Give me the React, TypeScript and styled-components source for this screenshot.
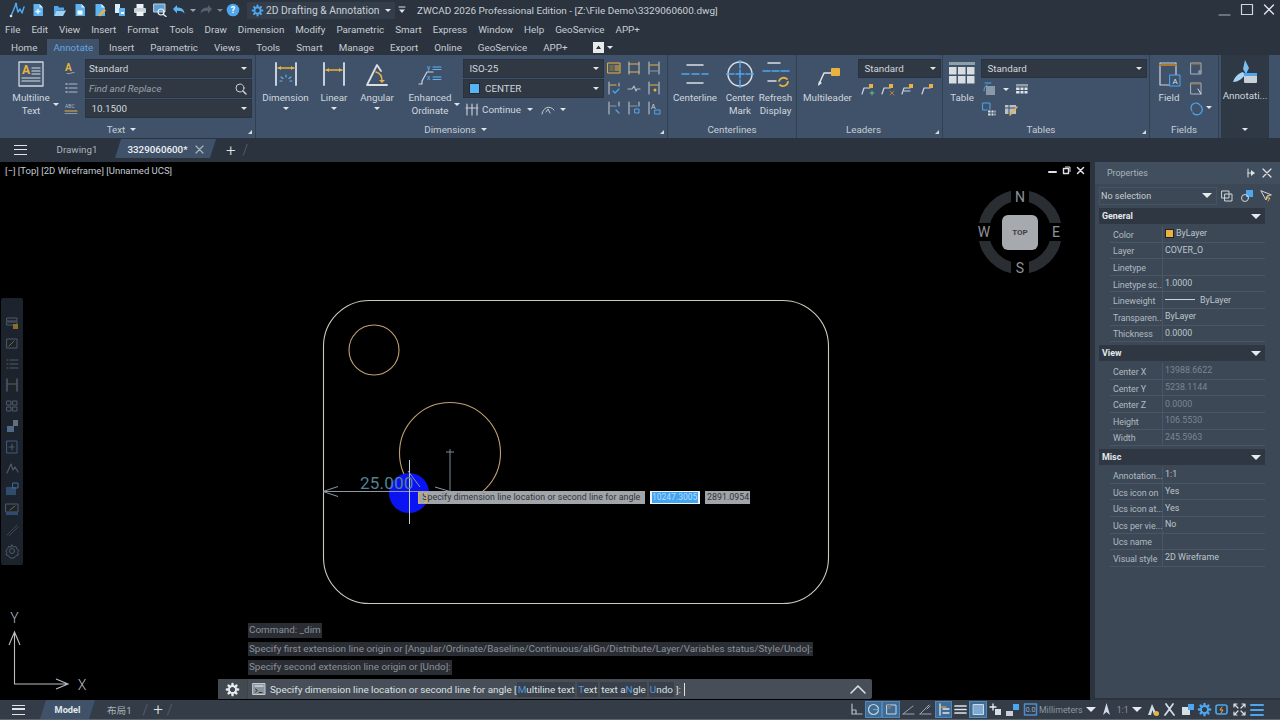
import React from "react";
import styled, { createGlobalStyle } from "styled-components";

const Y = "#e9b23f";
const B = "#4ea6ee";
const W = "#d9dee3";
const G = "#9aa5b1";

const Global = createGlobalStyle`
  html, body { margin: 0; padding: 0; background: #2b333e; overflow: hidden; }
  * { box-sizing: border-box; }
  body { font-family: Roboto, "Liberation Sans", "Noto Sans CJK SC", sans-serif; font-size: 9.8px; color: #cfd6dd; }
`;

const Page = styled.div`
  width: 1280px; height: 720px; display: flex; flex-direction: column; background: #2b333e; overflow: hidden;
`;
const TitleBar = styled.div`
  height: 20px; display: flex; align-items: center; position: relative; background: #2b333e; flex: none;
`;
const Qat = styled.div`display: flex; align-items: center; width: 247px; height: 20px; padding-left: 7px;`;
const QatSlot = styled.span<{ $w: number }>`width: ${p => p.$w}px; display: flex; justify-content: center; align-items: center; flex: none;`;
const Workspace = styled.div`
  width: 148px; height: 17px; background: #343e4a; display: flex; align-items: center; padding: 0 4px; gap: 2px; color: #c9d0d7; font-size: 10.3px; flex: none; white-space: nowrap;
`;
const Grow = styled.span`flex: 1;`;
const Spacer = styled.span<{ $w: number }>`width: ${p => p.$w}px; flex: none;`;
const TitleText = styled.div`margin-left: 8px; color: #c9d0d7; font-size: 9.95px; white-space: nowrap;`;
const WinCtl = styled.div`margin-left: auto; display: flex; gap: 6px; padding-right: 3px; align-items: center;`;

const MenuBar = styled.div`
  height: 18px; display: flex; align-items: center; gap: 11px; padding-left: 5px; background: #2b333e; flex: none; white-space: nowrap; color: #c6cdd4;
`;
const TabBar = styled.div`
  height: 17px; display: flex; align-items: stretch; padding: 1px 0 0 3px; background: #2b333e; flex: none; white-space: nowrap; color: #c6cdd4;
`;
const RibbonTab = styled.div<{ $on?: boolean }>`
  padding: 0 ${p => (p.$on ? 6 : 8)}px; margin: 0 ${p => (p.$on ? 2 : 0)}px; display: flex; align-items: center; flex: none;
  background: ${p => (p.$on ? "#40526a" : "transparent")};
  color: ${p => (p.$on ? "#62a5e2" : "inherit")};
`;
const TabTool = styled.div`margin-left: 18px; display: flex; align-items: center; gap: 3px;`;
const WhiteKey = styled.span`
  width: 11px; height: 11px; background: #e8ebee; display: flex; align-items: center; justify-content: center;
`;

const Ribbon = styled.div`
  height: 83px; display: flex; background: #40526a; flex: none;
`;
const Panel = styled.div<{ $w: number; $dark?: boolean }>`
  width: ${p => p.$w}px; flex: none; display: flex; flex-direction: column; position: relative;
  border-right: 1px solid ${p => (p.$dark ? "transparent" : "#31404f")};
  margin-left: ${p => (p.$dark ? 2 : 0)}px;
  background: ${p => (p.$dark ? "#2e3945" : "transparent")};
`;
const PanelBody = styled.div`flex: 1; display: flex; padding-top: 4px; min-height: 0;`;
const PanelFoot = styled.div<{ $pr?: number }>`
  height: 15px; display: flex; align-items: center; justify-content: center; gap: 5px; position: relative; color: #c6cdd4; padding: 0 ${p => p.$pr ?? 0}px 2px 0; flex: none;
`;
const Launcher = styled.span`
  position: absolute; right: 3px; bottom: 4px; width: 0; height: 0; border-left: 4px solid transparent; border-bottom: 4px solid #d5dae0;
`;
const Big = styled.div<{ $w: number; $pr?: number }>`
  width: ${p => p.$w}px; flex: none; display: flex; flex-direction: column; align-items: center; position: relative; color: #cfd6dd; line-height: 13px; text-align: center; padding-right: ${p => p.$pr ?? 0}px;
`;
const BigIcon = styled.div<{ $mb?: number }>`height: 29px; display: flex; align-items: center; justify-content: center; margin-bottom: ${p => p.$mb ?? 3}px;`;
const Caret = styled.span<{ $c?: string; $ml?: number }>`
  display: inline-block; width: 0; height: 0; border-left: 3px solid transparent; border-right: 3px solid transparent; border-top: 3.5px solid ${p => p.$c || "#e1e5e9"}; flex: none; margin-left: ${p => p.$ml ?? 0}px;
`;
const BigCaret = styled(Caret)`margin-top: 3px;`;
const SideCaret = styled(Caret)`position: absolute; right: 3px; top: 44px;`;
const FieldCaret = styled(Caret)`align-self: flex-end; margin: 0 0 14px 1px;`;
const Stack = styled.div<{ $w: number }>`width: ${p => p.$w}px; flex: none; display: flex; flex-direction: column; gap: 1px;`;
const Combo = styled.div<{ $italic?: boolean }>`
  height: 19px; background: #2f3843; border: 1px solid #293240; display: flex; align-items: center; padding: 0 4px 0 3px; color: ${p => (p.$italic ? "#98a2ad" : "#cfd6dd")}; font-style: ${p => (p.$italic ? "italic" : "normal")}; flex: none; white-space: nowrap;
`;
const IconCol = styled.div<{ $w: number; $gap?: number; $mr?: number }>`
  width: ${p => p.$w}px; flex: none; display: flex; flex-direction: column; align-items: center; gap: ${p => p.$gap ?? 6}px; padding-top: 2px; margin-right: ${p => p.$mr ?? 0}px;
`;
const IconGrid = styled.div`
  display: grid; grid-template-columns: repeat(3, 20px); grid-auto-rows: 20px; place-items: center; flex: none; margin-top: -1px;
`;
const IconRow = styled.div<{ $gap?: number; $pl?: number }>`
  height: 20px; display: flex; align-items: center; gap: ${p => p.$gap ?? 4}px; padding-left: ${p => p.$pl ?? 0}px;
`;
const Swatch = styled.span`width: 11px; height: 11px; background: #5ab4f4; border: 1px solid #222b34; margin: 0 5px 0 2px;`;

const DocBar = styled.div`
  height: 24px; display: flex; align-items: center; background: #2b333e; flex: none; padding-left: 14px;
`;
const Burger = styled.span`
  width: 13px; height: 10px; border-top: 1.5px solid #dfe3e7; border-bottom: 1.5px solid #dfe3e7; position: relative; flex: none;
  &::after { content: ""; position: absolute; left: 0; right: 0; top: 2.8px; height: 1.5px; background: #dfe3e7; }
`;
const DocTab = styled.div<{ $on?: boolean; $ml: number; $w: number }>`
  margin-left: ${p => p.$ml}px; width: ${p => p.$w}px; height: 19px; flex: none; margin-bottom: 3px; padding-top: 2px;
  display: flex; align-items: center; justify-content: center; gap: 7px; white-space: nowrap;
  background: ${p => (p.$on ? "#40526a" : "transparent")};
  color: ${p => (p.$on ? "#eef1f4" : "#aab3bc")};
  font-weight: ${p => (p.$on ? 500 : 400)};
  clip-path: ${p => (p.$on ? "polygon(6px 0, 100% 0, calc(100% - 6px) 100%, 0 100%)" : "none")};
`;
const Plus = styled.span<{ $ml: number }>`margin-left: ${p => p.$ml}px; font-size: 17px; line-height: 17px; color: #dfe3e7; font-weight: 300;`;
const Slash = styled.span<{ $ml: number }>`margin-left: ${p => p.$ml}px; color: #5d6874; font-size: 14px; font-weight: 300;`;

const Main = styled.div`flex: 1; display: flex; min-height: 0; background: #2b333e;`;
const Canvas = styled.div`width: 1090px; flex: none; background: #000; position: relative; overflow: hidden;`;
const Drawing = styled.svg`position: absolute; left: 0; top: 0; display: block;`;
const ViewLabel = styled.div`position: absolute; left: 5px; top: 3px; color: #c3cad1; font-size: 9.5px; white-space: nowrap;`;
const ViewCtl = styled.div`position: absolute; left: 1048px; top: 4px; display: flex; gap: 5px;`;
const LeftTools = styled.div`
  position: absolute; left: 1px; top: 136px; width: 22px; height: 267px; background: #1c232c; border-radius: 2px; display: flex; flex-direction: column; align-items: center; padding-top: 17px; gap: 4.7px;
`;
const Tip = styled.div<{ $l: number; $w: number; $sel?: boolean }>`
  position: absolute; left: ${p => p.$l}px; top: 329px; width: ${p => p.$w}px; height: 13px; background: ${p => (p.$sel ? "#f0f3f5" : "#a1a5a9")}; color: #30343a; font-size: 8.8px; letter-spacing: .05px; line-height: 13px; white-space: nowrap; padding: 0 2px; display: flex; align-items: center;
`;
const TipSel = styled.span`background: #41a3f2; color: #b9dcf5; display: block; flex: 1; height: 11px; line-height: 11px; font-size: 8.5px; letter-spacing: 0;`;
const DashBox = styled.span`position: absolute; left: 418px; top: 331px; width: 9px; height: 10px; border: 1px dashed ${Y};`;
const Cmd = styled.div`position: absolute; left: 218px; top: 461px; width: 654px; display: flex; flex-direction: column; align-items: flex-start; font-size: 9.9px;`;
const History = styled.div`
  margin-left: 30px; height: 14.5px; margin-bottom: 4px; background: #2a2d33; color: #8b9198; padding: 0 1px; line-height: 14.5px; white-space: nowrap;
`;
const CmdInput = styled.div`
  width: 100%; height: 20px; margin-top: 0.5px; background: #474e57; border-radius: 2px; display: flex; align-items: center; color: #dbe0e4; white-space: nowrap;
`;
const CmdGear = styled.div`width: 30px; height: 100%; display: flex; align-items: center; justify-content: center; border-right: 1px solid #3d444c; flex: none; background: #424951;`;
const CmdText = styled.div`flex: 1; display: flex; align-items: center; padding-left: 4px;`;
const CmdPrompt = styled.span`margin-left: 4px;`;
const Chip = styled.span`background: #39404a; padding: 0 1px; margin-right: 2px; line-height: 15px;`;
const Key = styled.span`color: #4d98df;`;
const Cursor = styled.span`width: 1px; height: 13px; background: #dbe0e4; margin-left: 3px;`;

const Props = styled.div`
  width: 185px; margin-left: 5px; flex: none; background: #3c4855; height: 536px;
  display: flex; flex-direction: column; align-items: stretch;
`;
const PropHead = styled.div`
  height: 22px; background: #414e5d; display: flex; align-items: center; padding: 0 7px 0 12px; color: #a9b3bd; font-size: 8.9px; gap: 4px; flex: none;
`;
const PropPick = styled.div`display: flex; align-items: center; height: 19px; margin: 2px 0 0 4px; flex: none;`;
const PickBox = styled.div`
  width: 118px; height: 18px; border: 1px solid #465362; display: flex; align-items: center; padding: 0 4px 0 1px; color: #c6cdd4; font-size: 9px; flex: none;
`;
const PropSection = styled.div`
  height: 16px; margin: 3px 15px 0 4px; background: #2e3742; color: #e4e8eb; font-weight: 700; font-size: 8.9px; display: flex; align-items: center; padding: 0 4px 0 3px; flex: none; justify-content: space-between;
`;
const Rows = styled.div`margin: 2px 15px 0 15px; flex: none;`;
const PropRow = styled.div`
  height: 16.6px; display: grid; grid-template-columns: 53px 1fr; border-bottom: 1px solid #485665; align-items: center; white-space: nowrap; font-size: 8.9px;
`;
const PropKey = styled.span`padding-left: 3px; color: #b0bac3; overflow: hidden; border-right: 1px solid #485665; height: 100%; display: flex; align-items: center; padding-top: 2px; letter-spacing: -.06px;`;
const PropVal = styled.span<{ $dim?: boolean }>`padding-left: 2px; color: ${p => (p.$dim ? "#7a8794" : "#bec6ce")}; display: flex; align-items: center; gap: 3px; margin-top: -1px;`;
const ColorChip = styled.span`width: 7px; height: 7px; background: ${Y}; outline: 1px solid #222; margin-left: 1px;`;
const WeightLine = styled.span`width: 30px; height: 1px; background: #cdd3d9; margin-right: 2px;`;

const Status = styled.div`
  height: 20px; flex: none; display: flex; align-items: center; background: #333c47; padding-left: 12px; border-bottom: 1px solid #5a6570; position: relative;
`;
const ModelTab = styled.div`
  margin-left: 15px; width: 55px; height: 19px; background: #40526a; display: flex; align-items: center; justify-content: center; color: #e4e8eb; font-weight: 700; font-size: 9.2px;
  clip-path: polygon(6px 0, 100% 0, calc(100% - 6px) 100%, 0 100%);
`;
const LayoutTab = styled.div`margin-left: 12px; color: #aab3bc; font-size: 9.6px; white-space: nowrap;`;
const StatusRight = styled.div`margin-left: auto; display: flex; align-items: center; height: 100%; padding-right: 15px;`;
const StatusBtn = styled.span<{ $w?: number; $on?: boolean }>`
  width: ${p => p.$w ?? 17.4}px; height: 17px; display: flex; align-items: center; justify-content: center; flex: none;
  background: ${p => (p.$on ? "#3f6c96" : "transparent")};
  box-shadow: ${p => (p.$on ? "inset 0 0 0 1px #5186b6" : "none")};
`;
const StatusText = styled.span`color: #8c97a2; font-size: 8.8px; white-space: nowrap; padding: 0 3px 0 0;`;

type IP = { s?: number; children: React.ReactNode; vb?: number };
const Ic = ({ s = 16, vb, children }: IP) => (
  <svg width={s} height={s} viewBox={`0 0 ${vb ?? s} ${vb ?? s}`} fill="none" strokeLinecap="round" strokeLinejoin="round">{children}</svg>
);

const Doc = ({ mark }: { mark?: React.ReactNode }) => (
  <Ic s={14}>
    <path d="M2.500 1h6l3.500 3.500V13H2.500z" fill="#5eb4f3" />
    <path d="M8.500 1v3.500H12" fill="#d7ecfb" />
    {mark}
  </Ic>
);

const Q = {
  logo: <Ic s={18}><path d="M3 15l5-12 2 8 2-3 2 4 2-6" stroke="#4ea6ee" strokeWidth="1.500" /><circle cx="3" cy="15" r="1.300" fill={W} /><circle cx="8" cy="3" r="1.300" fill="#4ea6ee" /></Ic>,
  newf: <Doc mark={<path d="M5 8.500h4M7 6.500v4" stroke="#fff" strokeWidth="1.300" />} />,
  open: <Ic s={14}><path d="M1 3h4l1 1.500h5V7H4L1 12.500z" fill="#4ea6ee" /><path d="M3.500 7.500H13l-3 5.500H1z" fill="#9fd2f7" /></Ic>,
  save: <Doc mark={<rect x="4.500" y="7.500" width="5" height="4" fill="#fff" />} />,
  saveas: <Doc mark={<path d="M5 12l6-6 2 1.500-6 6z" fill={Y} />} />,
  batch: <Ic s={14}><path d="M2 1h5v9H2z" fill="#d7ecfb" /><path d="M6 5h6v8H6z" fill="#5eb4f3" /><rect x="8" y="9" width="3" height="2" fill="#fff" /></Ic>,
  print: <Ic s={14}><rect x="3.500" y="1" width="7" height="4" fill="#eef1f4" /><rect x="1" y="5" width="12" height="5" rx="1" fill="#c9d0d7" /><rect x="3.500" y="8.500" width="7" height="4.500" fill="#eef1f4" /></Ic>,
  preview: <Ic s={14}><rect x="1" y="1" width="11" height="8" fill="#5a9ed3" stroke="#c9d0d7" strokeWidth="1" /><circle cx="8" cy="9" r="3" stroke="#eef1f4" strokeWidth="1.200" /><path d="M10.500 11.500l2.500 2" stroke="#eef1f4" strokeWidth="1.300" /></Ic>,
  undo: <Ic s={14}><path d="M1 6l4-4v2.500c5 0 7 2 7.500 6-1.500-2-4-2.700-7.500-2.700V10.500z" fill="#5eb4f3" /></Ic>,
  redo: <Ic s={14}><path d="M13 6L9 2v2.500c-5 0-7 2-7.500 6 1.500-2 4-2.700 7.500-2.700V10.500z" fill="#56616d" /></Ic>,
  help: <Ic s={14}><circle cx="7" cy="7" r="6.300" fill="#4ea6ee" /><text x="7" y="10.200" fontSize="9" fontWeight="700" fill="#fff" textAnchor="middle" fontFamily="Roboto">?</text></Ic>,
};

const Gear = ({ c = "#4ea6ee", s = 13 }: { c?: string; s?: number }) => (
  <Ic s={s} vb={16}>
    <path d="M8 2v2M8 12v2M2 8h2M12 8h2M3.800 3.800l1.400 1.400M10.800 10.800l1.400 1.400M12.200 3.800l-1.400 1.400M5.200 10.800l-1.400 1.400" stroke={c} strokeWidth="2.600" />
    <circle cx="8" cy="8" r="3.800" stroke={c} strokeWidth="2" />
  </Ic>
);

const Dim = ({ kind }: { kind: "dim" | "lin" }) => (
  <Ic s={26}>
    <path d="M3 2v22M23 2v22" stroke="#c4d0db" strokeWidth="2" />
    <path d={kind === "dim" ? "M5 7h16" : "M5 9h16"} stroke={Y} strokeWidth="1.500" />
    <path d={kind === "dim" ? "M5 7l3-2v4zM21 7l-3-2v4z" : "M5 9l3-2v4zM21 9l-3-2v4z"} fill={Y} />
    {kind === "dim" && <path d="M8 16l2 1.500M13 14v2M18 16l-2 1.500M7 20h2M17 20h2" stroke="#5eb4f3" strokeWidth="1.200" />}
  </Ic>
);

const Small = {
  tf: <Ic s={14}><text x="1" y="10" fontSize="10" fill={Y} fontFamily="Roboto" fontWeight="700">A</text><path d="M3 12.500c2 1 4-1 7-1" stroke={G} /></Ic>,
  list: <Ic s={14}><path d="M5 3h8M5 7h8M5 11h8" stroke="#aeb8c2" strokeWidth="1.200" /><path d="M2 3h1M2 7h1M2 11h1" stroke="#aeb8c2" strokeWidth="1.500" /></Ic>,
  abc: <Ic s={14}><text x="1" y="7" fontSize="5" fill="#aeb8c2" fontFamily="Roboto">ABC</text><path d="M1 10h12" stroke={Y} /><path d="M1 12.500h12" stroke="#8c97a2" /></Ic>,
};

const g = (d: string, c = "#aeb8c2") => <path d={d} stroke={c} strokeWidth="1.200" />;
const Grid9: React.ReactNode[] = [
  <Ic s={14} key="1"><rect x="1" y="2" width="12" height="10" stroke={Y} /><rect x="2.500" y="4" width="4" height="6" fill="#7a6a40" />{g("M8 5h4M8 7h4M8 9h4", Y)}</Ic>,
  <Ic s={14} key="2">{g("M2 1v12M12 1v12")}{g("M2 3h10M2 11h10", Y)}</Ic>,
  <Ic s={14} key="3">{g("M2 1v12M12 1v12")}{g("M3 4h8", Y)}{g("M3 10h8", "#8c97a2")}</Ic>,
  <Ic s={14} key="4">{g("M2 1v12M12 2v3")}{g("M3 4h6", Y)}{g("M6 10l2 2 4-4", B)}</Ic>,
  <Ic s={14} key="5">{g("M1 8h4l2-3 2 5 1-2h3")}</Ic>,
  <Ic s={14} key="6">{g("M2 1v12M12 1v12")}{g("M3 4h8", Y)}<circle cx="8" cy="9" r="1.500" fill={Y} /></Ic>,
  <Ic s={14} key="7">{g("M2 1v12M12 1v4")}{g("M3 5h6", "#8c97a2")}{g("M9 9l3 3", B)}</Ic>,
  <Ic s={14} key="8">{g("M2 1v12M12 1v4")}{g("M3 5h7", "#8c97a2")}<rect x="8" y="8" width="4" height="4" stroke={B} /></Ic>,
  <Ic s={14} key="9">{g("M2 1v12")}<text x="4" y="8" fontSize="7" fill="#cfd6dd" fontFamily="Roboto">A</text><rect x="8" y="9" width="5" height="4" stroke={B} /></Ic>,
];

const leader = (extra: React.ReactNode, k: string) => (
  <Ic s={16} key={k}><path d="M2 13l2-6h6" stroke="#cfd6dd" strokeWidth="1.200" /><rect x="9" y="3" width="4" height="4" fill={Y} />{extra}</Ic>
);

const LeftIcons: React.ReactNode[] = [
  <><rect x="3" y="3" width="10" height="3" stroke="#4e5a68" /><rect x="3" y="7" width="10" height="3" stroke="#4e5a68" /><rect x="9" y="9" width="5" height="5" fill="#8a6d2a" /></>,
  <><rect x="3" y="3" width="10" height="9" stroke="#4e5a68" /><path d="M5 10l5-5" stroke="#7a6a3a" /></>,
  <><path d="M6 4h8M6 8h8M6 12h8" stroke="#4e5a68" /><path d="M3 4h1M3 8h1M3 12h1" stroke="#6a6040" /></>,
  <><path d="M3 2v12M13 2v12" stroke="#4e5a68" strokeWidth="1.500" /><path d="M4 7h8" stroke="#6a6040" /></>,
  <><rect x="3" y="3" width="4" height="4" stroke="#4e5a68" /><rect x="9" y="3" width="4" height="4" stroke="#4e5a68" /><rect x="3" y="9" width="4" height="4" stroke="#4e5a68" /><rect x="9" y="9" width="4" height="4" stroke="#4e5a68" /></>,
  <><rect x="9" y="2" width="5" height="6" fill="#8090a0" opacity=".7" /><rect x="3" y="8" width="7" height="6" fill="#4e6a88" /></>,
  <><rect x="3" y="2" width="10" height="12" stroke="#3f5c7c" /><path d="M5 8h5M8 5v6" stroke="#4e5a68" /></>,
  <path d="M3 13l4-9 2 6 2-3 3 5" stroke="#4e5a68" strokeWidth="1.200" />,
  <><rect x="2" y="6" width="10" height="8" fill="#2f4c6c" /><rect x="9" y="2" width="5" height="5" stroke="#3f6c9c" /></>,
  <><rect x="2" y="3" width="12" height="8" stroke="#4e5a68" /><path d="M6 9l5-4" stroke="#7a6a3a" /><rect x="2" y="11" width="12" height="3" fill="#2f4c6c" /></>,
  <path d="M3 13L13 3M5 14L14 5" stroke="#3e4752" />,
  <><circle cx="8" cy="8" r="2.500" stroke="#4e5a68" /><path d="M8 2l1.500 2 2.500-.5.800 2.500 2 1.500-1.200 2 .7 2.500-2.500.8L10 15H6l-1.300-2.200-2.500-.8.700-2.500L1.700 7.500l2-1.500.8-2.500L7 4z" stroke="#4e5a68" /></>,
];

const St = (n: React.ReactNode) => <Ic s={15}>{n}</Ic>;

const statusBtns: { on?: boolean; icon: React.ReactNode }[] = [
  { icon: St(<path d="M3 2v10h10M3 8h4v4" stroke="#b5bec7" strokeWidth="1.200" />) },
  { on: true, icon: St(<><circle cx="7.500" cy="7.500" r="5" stroke="#c8d3dd" strokeWidth="1.200" /><path d="M7.500 7.500h5" stroke="#7aa" /></>) },
  { on: true, icon: St(<><rect x="3" y="3" width="9" height="9" stroke="#c8d3dd" /><rect x="3" y="3" width="4" height="4" fill="#777" /></>) },
  { icon: St(<path d="M2 12L12 4M2 12h11" stroke="#9aa5b1" />) },
  { icon: St(<path d="M2 12L11 3M2 12h11M9 7l3-3" stroke="#9aa5b1" />) },
  { on: true, icon: St(<><path d="M4 2v11M7 7h6M7 11h6" stroke="#dfe3e7" strokeWidth="1.300" /><path d="M4 5h6" stroke={Y} /></>) },
  { icon: St(<path d="M2 4h11M2 7.500h11M2 11h11" stroke="#dfe3e7" strokeWidth="1.700" />) },
  { on: true, icon: St(<rect x="2.500" y="2.500" width="10" height="10" fill="#7fa9d0" stroke="#d0dae3" />) },
  { icon: St(<><path d="M5 2v6M2 5h6" stroke="#eef1f4" strokeWidth="1.300" /><rect x="7" y="7" width="6" height="6" fill="#d6dde3" /></>) },
  { icon: St(<><rect x="1" y="9" width="7" height="5" fill="#c9d0d7" /><rect x="8" y="2" width="6" height="6" fill="#4ea6ee" /></>) },
  { icon: St(<><rect x="1.500" y="2" width="12" height="11" stroke="#4e8ed0" strokeWidth="1.500" /><text x="7.500" y="10" textAnchor="middle" fontSize="7" fill="#9ac" fontFamily="Roboto">0.0</text></>) },
];
const statusBtns2: React.ReactNode[] = [
  St(<><path d="M7 2L3 13h3l1.500-5L9 13h3z" fill="#cfdbe6" /><circle cx="11.500" cy="11.500" r="2.500" fill={Y} /></>),
  St(<path d="M4 2l3.500 5L11 2M7.500 7L3 13M7.500 7l4.500 6" stroke="#cfdbe6" strokeWidth="1.800" />),
  St(<><rect x="2" y="5" width="8" height="8" fill="#d7dfe6" /><rect x="8" y="2" width="6" height="6" fill="#4ea6ee" /></>),
  <Gear s={15} c="#4ea6ee" />,
  St(<><rect x="2" y="3" width="11" height="9" rx="2" stroke="#4ea6ee" strokeWidth="1.600" /><path d="M8 5l-2 3h3l-2 3" stroke={Y} /></>),
  St(<path d="M2 5V2h3M10 2h3v3M13 10v3h-3M5 13H2v-3M3 3l3 3M12 3L9 6M12 12L9 9M3 12l3-3" stroke="#dfe3e7" strokeWidth="1.200" />),
];

const props = [
  { title: "General", rows: [
    ["Color", <><ColorChip />ByLayer</>], ["Layer", "COVER_O"], ["Linetype", ""], ["Linetype sc...", "1.0000"],
    ["Lineweight", <><WeightLine />ByLayer</>], ["Transparen...", "ByLayer"], ["Thickness", "0.0000"],
  ] },
  { title: "View", dim: true, rows: [
    ["Center X", "13988.6622"], ["Center Y", "5238.1144"], ["Center Z", "0.0000"], ["Height", "106.5530"], ["Width", "245.5963"],
  ] },
  { title: "Misc", rows: [
    ["Annotation...", "1:1"], ["Ucs icon on", "Yes"], ["Ucs icon at...", "Yes"], ["Ucs per vie...", "No"], ["Ucs name", ""], ["Visual style", "2D Wireframe"],
  ] },
] as { title: string; dim?: boolean; rows: [string, React.ReactNode][] }[];

const Tri = styled.span`width: 0; height: 0; border-left: 5px solid transparent; border-right: 5px solid transparent; border-top: 5px solid #e6eaee; flex: none;`;

export default function App() {
  return (
    <Page>
      <Global />
      <TitleBar>
        <Qat>
          <QatSlot $w={19}>{Q.logo}</QatSlot>
          <QatSlot $w={24}>{Q.newf}</QatSlot>
          <QatSlot $w={20}>{Q.open}</QatSlot>
          <QatSlot $w={20}>{Q.save}</QatSlot>
          <QatSlot $w={20}>{Q.saveas}</QatSlot>
          <QatSlot $w={20}>{Q.batch}</QatSlot>
          <QatSlot $w={20}>{Q.print}</QatSlot>
          <QatSlot $w={20}>{Q.preview}</QatSlot>
          <QatSlot $w={18}>{Q.undo}</QatSlot>
          <QatSlot $w={9}><Caret $c="#9aa5b1" /></QatSlot>
          <QatSlot $w={18}>{Q.redo}</QatSlot>
          <QatSlot $w={9}><Caret $c="#7a8692" /></QatSlot>
          <QatSlot $w={18}>{Q.help}</QatSlot>
        </Qat>
        <Workspace>
          <Gear />
          2D Drafting &amp; Annotation
          <Grow />
          <Caret />
        </Workspace>
        <QatSlot $w={14}><Ic s={10}><path d="M2 2h6" stroke="#dfe3e7" /><path d="M2 4.500h6L5 8z" fill="#dfe3e7" /></Ic></QatSlot>
        <TitleText>ZWCAD 2026 Professional Edition - [Z:\File Demo\3329060600.dwg]</TitleText>
        <WinCtl>
          <Ic s={16}><path d="M2 13h11" stroke="#aab3bc" strokeWidth="1.200" /></Ic>
          <Ic s={16}><rect x="2.500" y="2.500" width="11" height="10" stroke="#cfd6dd" strokeWidth="1.200" /></Ic>
          <Ic s={16}><path d="M3.500 3l9 9M12.500 3l-9 9" stroke="#e6eaee" strokeWidth="1.300" /></Ic>
        </WinCtl>
      </TitleBar>

      <MenuBar>
        {["File","Edit","View","Insert","Format","Tools","Draw","Dimension","Modify","Parametric","Smart","Express","Window","Help","GeoService","APP+"].map(m => <span key={m}>{m}</span>)}
      </MenuBar>

      <TabBar>
        {["Home","Annotate","Insert","Parametric","Views","Tools","Smart","Manage","Export","Online","GeoService","APP+"].map(t => <RibbonTab key={t} $on={t === "Annotate"}>{t}</RibbonTab>)}
        <TabTool>
          <WhiteKey><Ic s={7}><path d="M3.500 1.500L6 5H1z" fill="#333" /></Ic></WhiteKey>
          <Caret $c="#e8ebee" />
        </TabTool>
      </TabBar>

      <Ribbon>
        <Panel $w={256}>
          <PanelBody>
            <Big $w={62}>
              <BigIcon>
                <Ic s={26}>
                  <rect x="1" y="1" width="24" height="24" fill="#46586f" stroke="#cfd6dd" strokeWidth="1.300" />
                  <text x="4" y="13" fontSize="12" fontWeight="700" fill={Y} fontFamily="Roboto">A</text>
                  <path d="M14 7h8M14 10h8M14 13h8M4 17h18M4 20h18" stroke="#d8dee4" strokeWidth="1.200" />
                </Ic>
              </BigIcon>
              <span>Multiline<br />Text</span>
              <SideCaret />
            </Big>
            <IconCol $w={18} $mr={5}>{Small.tf}{Small.list}{Small.abc}</IconCol>
            <Stack $w={167}>
              <Combo>Standard<Grow /><Caret /></Combo>
              <Combo $italic>Find and Replace<Grow /><Ic s={12}><circle cx="5" cy="5" r="4" stroke="#c9d0d7" /><path d="M8 8l3 3" stroke="#c9d0d7" strokeWidth="1.500" /></Ic></Combo>
              <Combo>&nbsp;10.1500<Grow /><Caret /></Combo>
            </Stack>
          </PanelBody>
          <PanelFoot $pr={12}>Text <Caret /><Launcher /></PanelFoot>
        </Panel>

        <Panel $w={412}>
          <PanelBody>
            <Big $w={59}><BigIcon><Dim kind="dim" /></BigIcon>Dimension<BigCaret /></Big>
            <Big $w={38}><BigIcon><Dim kind="lin" /></BigIcon>Linear<BigCaret /></Big>
            <Big $w={48}>
              <BigIcon><Ic s={26}><path d="M3 24h20M3 24L13 4l4 6" stroke="#d9dee3" strokeWidth="1.800" /><path d="M12 11c4 1 6 5 6 9" stroke={Y} strokeWidth="1.500" /><path d="M15 19h6l-3 3z" fill={Y} /></Ic></BigIcon>
              Angular<BigCaret />
            </Big>
            <Big $w={62} $pr={4}>
              <BigIcon><Ic s={26}><path d="M2 23h3v-3l5-9h6" stroke="#cfd6dd" strokeWidth="1.200" /><path d="M16 6h8M16 8.500h8M16 16h8M16 18.500h8" stroke="#5eb4f3" /><text x="10" y="9" fontSize="7" fill="#5eb4f3" fontFamily="Roboto">y</text><text x="10" y="19" fontSize="7" fill="#5eb4f3" fontFamily="Roboto">x</text></Ic></BigIcon>
              <span>Enhanced<br />Ordinate</span>
              <SideCaret />
            </Big>
            <Stack $w={141}>
              <Combo>&nbsp;ISO-25<Grow /><Caret /></Combo>
              <Combo><Swatch />CENTER<Grow /><Caret /></Combo>
              <IconRow $gap={3} $pl={2}>
                <Ic s={14}><path d="M2 2v11M7 2v11M12 2v11M1 6h12" stroke="#c4ccd4" strokeWidth="1.200" /></Ic>
                <span>Continue</span>
                <Caret $ml={3} />
                <Spacer $w={2} />
                <Ic s={14}><path d="M1 12c1-7 8-9 12-4M5 10l2-3 2 4" stroke="#c4ccd4" /></Ic>
                <Caret $ml={2} />
              </IconRow>
            </Stack>
            <IconGrid>{Grid9}</IconGrid>
          </PanelBody>
          <PanelFoot $pr={12}>Dimensions <Caret /><Launcher /></PanelFoot>
        </Panel>

        <Panel $w={129}>
          <PanelBody>
            <Big $w={54}>
              <BigIcon><Ic s={28}><path d="M6 5h16M6 23h16" stroke={W} strokeWidth="1.500" /><path d="M1 14h7M11 14h7M21 14h6" stroke={B} strokeWidth="1.500" /></Ic></BigIcon>
              Centerline
            </Big>
            <Big $w={36}>
              <BigIcon><Ic s={28}><circle cx="14" cy="14" r="12" stroke={W} strokeWidth="1.500" /><path d="M14 0v28M0 14h28" stroke={B} strokeWidth="1.500" strokeDasharray="8 2" /></Ic></BigIcon>
              <span>Center<br />Mark</span>
            </Big>
            <Big $w={35}>
              <BigIcon><Ic s={28}><path d="M6 3h12M6 21h8" stroke={W} strokeWidth="1.500" /><path d="M1 11h7M10 11h7M19 11h8" stroke={B} strokeWidth="1.500" /><path d="M17 21a5 5 0 0 1 8-2M26 22a5 5 0 0 1-8 3" stroke={Y} strokeWidth="1.800" /></Ic></BigIcon>
              <span>Refresh<br />Display</span>
            </Big>
          </PanelBody>
          <PanelFoot>Centerlines</PanelFoot>
        </Panel>

        <Panel $w={146}>
          <PanelBody>
            <Big $w={61}>
              <BigIcon><Ic s={28}><path d="M5 24l5-11h7" stroke="#dfe3e7" strokeWidth="1.500" /><path d="M4 26l1-5 3 2z" fill="#dfe3e7" /><rect x="17" y="8" width="9" height="8" rx="1" fill={Y} /></Ic></BigIcon>
              Multileader
            </Big>
            <Stack $w={83}>
              <Combo>&nbsp;Standard<Grow /><Caret /></Combo>
              <IconRow $gap={4} $pl={2}>
                {leader(<path d="M10 12h4M12 10v4" stroke="#5fc08a" />, "a")}
                {leader(<path d="M10 10l4 4M14 10l-4 4" stroke="#b08040" />, "b")}
                {leader(<path d="M4 10h6" stroke="#cfd6dd" />, "c")}
                {leader(null, "d")}
              </IconRow>
            </Stack>
          </PanelBody>
          <PanelFoot $pr={12}>Leaders<Launcher /></PanelFoot>
        </Panel>

        <Panel $w={207}>
          <PanelBody>
            <Big $w={38}>
              <BigIcon>
                <Ic s={28}>
                  <rect x="1" y="2" width="26" height="3" fill="#8fa0a8" />
                  {[7, 16].map(y => [1, 10, 19].map(x => <rect key={`${x}${y}`} x={x} y={y} width="7.500" height="7.500" fill="#d8dde2" />))}
                </Ic>
              </BigIcon>
              Table
            </Big>
            <Stack $w={166}>
              <Combo>&nbsp;Standard<Grow /><Caret /></Combo>
              <IconRow $gap={5} $pl={1}>
                <Ic s={16}><rect x="4" y="5" width="9" height="9" fill="#8a99a8" /><path d="M3 2h6M2 10c0-3 1-5 3-6" stroke={B} /></Ic>
                <Caret />
                <Ic s={16}><rect x="2" y="3" width="12" height="3" fill="#8fa0a8" /><path d="M2 6h12v7H2zM6 6v7M10 6v7M2 9.500h12" fill="#e0e4e8" stroke="#40526a" /></Ic>
              </IconRow>
              <IconRow $gap={5} $pl={1}>
                <Ic s={16}><rect x="1" y="1" width="7" height="7" stroke={B} /><path d="M6 8h8v6H6zM9 8v6M12 8v6M6 11h8" fill="#e0e4e8" stroke="#40526a" /></Ic>
                <Ic s={16}><rect x="2" y="3" width="11" height="9" fill="#b8c0c8" /><path d="M2 6h11M6 3v9" stroke="#40526a" /><path d="M7 13l7-8" stroke={Y} strokeWidth="1.500" /></Ic>
              </IconRow>
            </Stack>
          </PanelBody>
          <PanelFoot $pr={10}>Tables<Launcher /></PanelFoot>
        </Panel>

        <Panel $w={69}>
          <PanelBody>
            <Big $w={38}>
              <BigIcon><Ic s={26}><rect x="4" y="2" width="16" height="22" stroke="#cfd6dd" strokeWidth="1.200" /><path d="M4 4h16" stroke="#a87a30" strokeWidth="2" /><rect x="14" y="14" width="10" height="11" fill="#40526a" stroke={B} /><text x="19" y="23" fontSize="8" fill="#cfe3f5" textAnchor="middle" fontFamily="Roboto">A</text></Ic></BigIcon>
              Field
            </Big>
            <IconCol $w={17} $gap={5}>
              <Ic s={15}><rect x="2" y="2" width="10" height="11" stroke="#aab3bc" /><path d="M2 3h10" stroke="#a87a30" /><circle cx="11" cy="11" r="2" fill="#8c97a2" /></Ic>
              <Ic s={15}><rect x="2" y="2" width="10" height="11" stroke="#aab3bc" /><path d="M2 3h10" stroke="#a87a30" /><path d="M9 8l3 5" stroke="#dfe3e7" /></Ic>
              <Ic s={15}><path d="M3 10a5 5 0 0 1 8-6M12 5a5 5 0 0 1-8 7" stroke={B} strokeWidth="1.200" /></Ic>
            </IconCol>
            <FieldCaret />
          </PanelBody>
          <PanelFoot>Fields</PanelFoot>
        </Panel>

        <Panel $w={48} $dark>
          <PanelBody>
            <Big $w={48}>
              <BigIcon $mb={1}>
                <Ic s={28}><path d="M14 0l4 8-3 6-3-5z" fill="#7dbdf0" /><path d="M2 22c2-6 6-9 10-10l2 3c-3 4-7 7-12 7z" fill="#a8d4f4" /><rect x="13" y="13" width="13" height="10" rx="1" fill="#c9d0d7" /><rect x="13" y="13" width="13" height="3" fill={B} /></Ic>
              </BigIcon>
              Annotati...
            </Big>
          </PanelBody>
          <PanelFoot><Caret /></PanelFoot>
        </Panel>
      </Ribbon>

      <DocBar>
        <Burger />
        <DocTab $ml={17} $w={66}>Drawing1</DocTab>
        <DocTab $on $ml={5} $w={101}>3329060600* <Ic s={9}><path d="M1 1l7 7M8 1L1 8" stroke="#aab3bc" strokeWidth="1.200" /></Ic></DocTab>
        <Plus $ml={10}>+</Plus>
        <Slash $ml={7}>/</Slash>
      </DocBar>

      <Main>
        <Canvas>
          <Drawing width="1090" height="538" viewBox="0 162 1090 538" fill="none">
            <rect x="323.500" y="300.500" width="505" height="303" rx="46" stroke="#cfc9bb" strokeWidth="1.100" />
            <circle cx="374" cy="350" r="25" stroke="#c0a070" strokeWidth="1.100" />
            <circle cx="450" cy="453" r="50.500" stroke="#c0a070" strokeWidth="1.100" />
            <circle cx="409" cy="493" r="20" fill="#0a14f2" />
            <path d="M323 491.500h95" stroke="#8d98a2" />
            <path d="M323 491.500l15-5M323 491.500l15 5M435 487l15 4.500" stroke="#8d98a2" />
            <path d="M450 449v42M446 452h8" stroke="#7f8890" />
            <path d="M409.500 460v64" stroke="#c9cfd4" />
            <path d="M408 471l12 16" stroke="#8d98a2" />
            <text x="360" y="489" fontSize="17" fill="#55808f" fontFamily="Roboto" letterSpacing=".2">25.000</text>

            <circle cx="1020" cy="232" r="36.500" stroke="#2a2e33" strokeWidth="11" />
            <rect x="1011" y="188" width="18" height="16" fill="#000" />
            <rect x="1011" y="260" width="18" height="16" fill="#000" />
            <rect x="976" y="223" width="16" height="18" fill="#000" />
            <rect x="1048" y="223" width="16" height="18" fill="#000" />
            <g fontFamily="Roboto" fontSize="14" fill="#8d9399" textAnchor="middle">
              <text x="1020" y="202">N</text>
              <text x="1020" y="273">S</text>
              <text x="984" y="237">W</text>
              <text x="1056" y="237">E</text>
            </g>
            <rect x="1002" y="215" width="36" height="35" rx="6" fill="#a6aaae" />
            <text x="1020" y="235" textAnchor="middle" fontSize="8" fontWeight="700" fill="#3c4046" fontFamily="Roboto">TOP</text>

            <path d="M14.500 632v52h52M9 645l5.500-13 5.500 13M56 679l12 5-12 5" stroke="#b9bec3" strokeWidth="1.100" />
            <g fontFamily="Roboto" fontSize="14" fill="#b9bec3" textAnchor="middle" fontWeight="300">
              <text x="14.500" y="623">Y</text>
              <text x="82" y="690">X</text>
            </g>
          </Drawing>

          <ViewLabel>[−] [Top] [2D Wireframe] [Unnamed UCS]</ViewLabel>
          <ViewCtl>
            <Ic s={9}><path d="M1 6h7" stroke="#dfe3e7" strokeWidth="2" /></Ic>
            <Ic s={9}><rect x="1.500" y="2.500" width="5" height="5" stroke="#dfe3e7" strokeWidth="1.400" /><path d="M3.500 1h4.500v4.500" stroke="#dfe3e7" /></Ic>
            <Ic s={9}><path d="M1.500 1.500l6 6M7.500 1.500l-6 6" stroke="#dfe3e7" strokeWidth="1.500" /></Ic>
          </ViewCtl>

          <LeftTools>
            {LeftIcons.map((n, i) => <Ic key={i} s={16}>{n}</Ic>)}
          </LeftTools>

          <Tip $l={418} $w={227}>&nbsp;Specify dimension line location or second line for angle</Tip>
          <DashBox />
          <Tip $l={650} $w={50} $sel><TipSel>10247.3005</TipSel></Tip>
          <Tip $l={705} $w={45}>2891.0954</Tip>

          <Cmd>
            <History>Command: _dim</History>
            <History>Specify first extension line origin or [Angular/Ordinate/Baseline/Continuous/aliGn/Distribute/Layer/Variables status/Style/Undo]:</History>
            <History>Specify second extension line origin or [Undo]:</History>
            <CmdInput>
              <CmdGear><Gear c="#e6eaee" s={15} /></CmdGear>
              <CmdText>
                <Ic s={14}><rect x="1" y="1.500" width="12" height="11" fill="#8c949c" stroke="#c4cad0" /><path d="M3 4h8" stroke="#eef1f4" /><path d="M3.500 7l2 1.500-2 1.500M7 10.500h3" stroke="#333" /></Ic>
                <CmdPrompt>Specify dimension line location or second line for angle [</CmdPrompt>
                <Chip><Key>M</Key>ultiline text</Chip>
                <Chip><Key>T</Key>ext</Chip>
                <Chip>text a<Key>N</Key>gle</Chip>
                <Chip><Key>U</Key>ndo</Chip>
                ]:
                <Cursor />
                <Grow />
                <Ic s={18}><path d="M2 13l7-7 7 7" stroke="#dfe3e7" strokeWidth="1.500" /></Ic>
                <Spacer $w={5} />
              </CmdText>
            </CmdInput>
          </Cmd>
        </Canvas>

        <Props>
          <PropHead>
            Properties
            <Grow />
            <Ic s={12}><path d="M3 2v8" stroke="#dfe3e7" /><path d="M6 3l4 3-4 3z" fill="#dfe3e7" /><path d="M3 6h4" stroke="#dfe3e7" /></Ic>
            <Ic s={12}><path d="M2 2l8 8M10 2l-8 8" stroke="#dfe3e7" strokeWidth="1.200" /></Ic>
          </PropHead>
          <PropPick>
            <PickBox>No selection<Grow /><Tri /></PickBox>
            <QatSlot $w={20}><Ic s={14}><rect x="2" y="2" width="7" height="7" stroke="#cfd6dd" /><rect x="5" y="5" width="7" height="7" stroke="#cfd6dd" /></Ic></QatSlot>
            <QatSlot $w={20}><Ic s={14}><rect x="6" y="1" width="7" height="7" fill={B} /><circle cx="5" cy="9" r="3.500" stroke="#cfd6dd" /></Ic></QatSlot>
            <QatSlot $w={18}><Ic s={14}><path d="M2 2l5 9 1-4 4-1z" stroke="#cfd6dd" /><path d="M10 6l-2 3h3l-2 3" stroke={Y} /></Ic></QatSlot>
          </PropPick>
          {props.map(s => (
            <React.Fragment key={s.title}>
              <PropSection>{s.title}<Tri /></PropSection>
              <Rows>
                {s.rows.map(([k, v]) => (
                  <PropRow key={k}>
                    <PropKey>{k}</PropKey>
                    <PropVal $dim={s.dim}>{v}</PropVal>
                  </PropRow>
                ))}
              </Rows>
            </React.Fragment>
          ))}
        </Props>
      </Main>

      <Status>
        <Burger />
        <ModelTab>Model</ModelTab>
        <LayoutTab>布局1</LayoutTab>
        <Slash $ml={11}>/</Slash>
        <Plus $ml={5}>+</Plus>
        <Slash $ml={4}>/</Slash>
        <StatusRight>
          {statusBtns.map((b, i) => <StatusBtn key={i} $on={b.on}>{b.icon}</StatusBtn>)}
          <StatusText>Millimeters</StatusText>
          <Tri />
          <StatusBtn $w={21}><Ic s={15}><path d="M7.500 1L4 13l3.500-3 3.500 3z" fill="#cfdbe6" /></Ic></StatusBtn>
          <StatusText>1:1</StatusText>
          <Tri />
          <Spacer $w={2} />
          {statusBtns2.map((n, i) => <StatusBtn key={i}>{n}</StatusBtn>)}
          <Spacer $w={1} />
          <Ic s={16}><path d="M2 3h12M2 8h12M2 13h12" stroke={B} strokeWidth="2" /></Ic>
        </StatusRight>
      </Status>
    </Page>
  );
}
